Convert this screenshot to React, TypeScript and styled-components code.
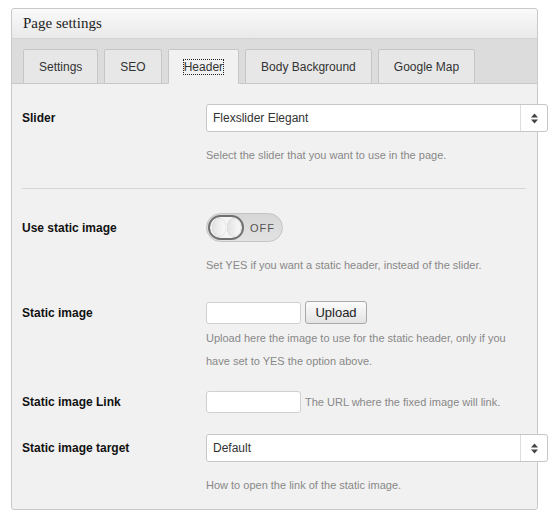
import React from "react";
import styled, { createGlobalStyle } from "styled-components";

const GlobalStyle = createGlobalStyle`
  html, body { margin: 0; padding: 0; background: #ffffff; }
  body { font-family: "Liberation Sans", Arial, sans-serif; }
`;

const Page = styled.div`
  padding: 8px 0 0 11px;
`;

const Panel = styled.div`
  width: 527px;
  box-sizing: border-box;
  border: 1px solid #c9c9c9;
  border-radius: 3px;
  background: #f1f1f1;
`;

const PanelHeader = styled.div`
  height: 29px;
  padding-left: 11px;
  display: flex;
  align-items: center;
  background: linear-gradient(#fafafa, #e9e9e9);
  border-bottom: 1px solid #d3d3d3;
  border-radius: 3px 3px 0 0;
  font-family: "Liberation Serif", "Times New Roman", serif;
  font-size: 15px;
  color: #222;
`;

const TabStrip = styled.div`
  display: flex;
  align-items: flex-end;
  gap: 6px;
  padding: 10px 0 0 11px;
  background: #dcdcdc;
  border-bottom: 1px solid #c8c8c8;
`;

const Tab = styled.div<{ $active?: boolean }>`
  height: 35px;
  margin-bottom: -1px;
  box-sizing: border-box;
  padding: 0 15px;
  display: flex;
  align-items: center;
  border: 1px solid #c6c6c6;
  border-bottom-color: ${(p) => (p.$active ? "#f1f1f1" : "#c6c6c6")};
  border-radius: 2px 2px 0 0;
  background: ${(p) => (p.$active ? "#f1f1f1" : "#e7e7e7")};
  font-size: 12px;
  color: #333;
`;

const FocusText = styled.span`
  outline: 1px dotted #222;
  outline-offset: 0;
`;

const Content = styled.div`
  padding: 20px 11px 13px 10px;
`;

const Row = styled.div<{ $mt?: number }>`
  display: grid;
  grid-template-columns: 184px 1fr;
  margin-top: ${(p) => p.$mt ?? 0}px;
`;

const Label = styled.div<{ $h: number }>`
  height: ${(p) => p.$h}px;
  display: flex;
  align-items: center;
  font-weight: bold;
  font-size: 12px;
  color: #111;
`;

const Field = styled.div`
  display: flex;
  flex-direction: column;
  align-items: flex-start;
  min-width: 0;
`;

const InlineField = styled.div`
  display: flex;
  align-items: center;
  gap: 4px;
`;

const Help = styled.div<{ $mt?: number; $lh?: number }>`
  margin-top: ${(p) => p.$mt ?? 0}px;
  max-width: 310px;
  font-size: 11px;
  line-height: ${(p) => p.$lh ?? 22}px;
  color: #888;
`;

const InlineHelp = styled.span`
  font-size: 11px;
  color: #888;
`;

const Divider = styled.div`
  height: 1px;
  background: #d6d6d6;
  margin: 22px 0 24px;
`;

const Select = styled.div`
  width: 342px;
  height: 28px;
  box-sizing: border-box;
  display: flex;
  align-items: stretch;
  border: 1px solid #c6c6c6;
  border-radius: 3px;
  background: #ffffff;
  font-size: 12px;
  color: #333;
`;

const SelectValue = styled.div`
  flex: 1;
  display: flex;
  align-items: center;
  padding-left: 6px;
`;

const SelectArrow = styled.div`
  width: 26px;
  border-left: 1px solid #dddddd;
  display: flex;
  align-items: center;
  justify-content: center;
`;

const TextInput = styled.input`
  width: 95px;
  height: 22px;
  box-sizing: border-box;
  margin: 0;
  border: 1px solid #d0d0d0;
  border-radius: 3px;
  background: #ffffff;
`;

const UploadButton = styled.button`
  width: 62px;
  height: 23px;
  box-sizing: border-box;
  margin: 0;
  padding: 0;
  border: 1px solid #a9a9a9;
  border-radius: 3px;
  background: linear-gradient(#fcfcfc, #e3e3e3);
  font-family: "Liberation Sans", Arial, sans-serif;
  font-size: 13px;
  color: #222;
`;

const Toggle = styled.div`
  width: 77px;
  height: 29px;
  box-sizing: border-box;
  padding: 0 1px;
  display: flex;
  align-items: center;
  border: 1px solid #c4c4c4;
  border-radius: 15px;
  background: linear-gradient(#d6d6d6, #e3e3e3);
`;

const Knob = styled.div`
  width: 36px;
  height: 25px;
  box-sizing: border-box;
  border: 2px solid #707070;
  border-radius: 13px;
  background: #f4f4f4;
  display: flex;
  align-items: center;
  justify-content: center;
  gap: 1px;
`;

const KnobDot = styled.div`
  width: 14px;
  height: 19px;
  border-radius: 50%;
  background: linear-gradient(90deg, #e2e2e2, #fafafa);
  box-shadow: inset 0 0 1px #bbb;
`;

const ToggleText = styled.span`
  margin-left: 6px;
  font-size: 11px;
  letter-spacing: 1px;
  color: #555;
`;

const Arrows = () => (
  <svg width="9" height="11" viewBox="0 0 9 11">
    <path d="M4.5 0.5 L8 4.5 L1 4.5 Z" fill="#444" />
    <path d="M4.5 10.5 L8 6.5 L1 6.5 Z" fill="#444" />
  </svg>
);

const SelectBox = ({ value }: { value: string }) => (
  <Select>
    <SelectValue>{value}</SelectValue>
    <SelectArrow>
      <Arrows />
    </SelectArrow>
  </Select>
);

export default function App() {
  return (
    <>
      <GlobalStyle />
      <Page>
        <Panel>
          <PanelHeader>Page settings</PanelHeader>
          <TabStrip>
            <Tab>Settings</Tab>
            <Tab>SEO</Tab>
            <Tab $active>
              <FocusText>Header</FocusText>
            </Tab>
            <Tab>Body Background</Tab>
            <Tab>Google Map</Tab>
          </TabStrip>
          <Content>
            <Row>
              <Label $h={28}>Slider</Label>
              <Field>
                <SelectBox value="Flexslider Elegant" />
                <Help $mt={12}>Select the slider that you want to use in the page.</Help>
              </Field>
            </Row>
            <Divider />
            <Row>
              <Label $h={29}>Use static image</Label>
              <Field>
                <Toggle>
                  <Knob>
                    <KnobDot />
                    <KnobDot />
                  </Knob>
                  <ToggleText>OFF</ToggleText>
                </Toggle>
                <Help $mt={12}>Set YES if you want a static header, instead of the slider.</Help>
              </Field>
            </Row>
            <Row $mt={25}>
              <Label $h={23}>Static image</Label>
              <Field>
                <InlineField>
                  <TextInput type="text" />
                  <UploadButton>Upload</UploadButton>
                </InlineField>
                <Help $mt={3} $lh={23}>
                  Upload here the image to use for the static header, only if you have set to YES the option above.
                </Help>
              </Field>
            </Row>
            <Row $mt={18}>
              <Label $h={22}>Static image Link</Label>
              <InlineField>
                <TextInput type="text" />
                <InlineHelp>The URL where the fixed image will link.</InlineHelp>
              </InlineField>
            </Row>
            <Row $mt={21}>
              <Label $h={28}>Static image target</Label>
              <Field>
                <SelectBox value="Default" />
                <Help $mt={12}>How to open the link of the static image.</Help>
              </Field>
            </Row>
          </Content>
        </Panel>
      </Page>
    </>
  );
}
